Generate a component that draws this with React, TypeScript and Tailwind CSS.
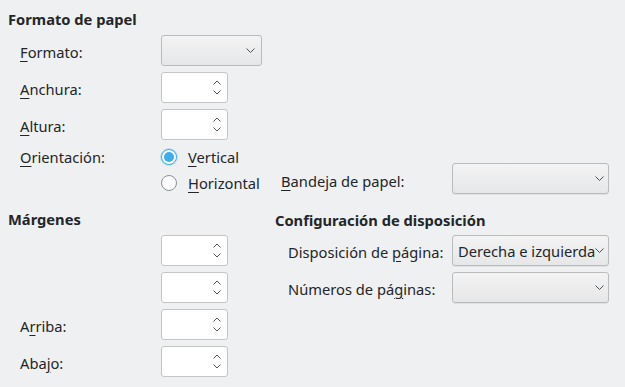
import React from "react";

const Chevron = ({ up = false, small = false }: { up?: boolean; small?: boolean }) =>
  small ? (
    <svg width="8" height="5" viewBox="0 0 8 5" className="block shrink-0">
      <polyline
        points={up ? "0.5,4.5 4,1 7.5,4.5" : "0.5,0.5 4,4 7.5,0.5"}
        fill="none"
        stroke="#4f5255"
        strokeWidth="1"
      />
    </svg>
  ) : (
    <svg width="9" height="5" viewBox="0 0 9 5" className="block shrink-0">
      <polyline
        points={up ? "0.5,4.5 4.5,0.5 8.5,4.5" : "0.5,0.5 4.5,4.5 8.5,0.5"}
        fill="none"
        stroke="#4f5255"
        strokeWidth="1"
      />
    </svg>
  );

const Combo = ({ w, text }: { w: string; text?: string }) => (
  <div
    className={`${w} shrink-0 h-[31px] rounded-[3px] border border-[#b9bbbd] bg-gradient-to-b from-[#f3f3f4] to-[#e6e7e8] flex items-center pl-[5px] pr-[4px] shadow-[0_1px_0_rgba(0,0,0,0.06)]`}
  >
    <div className="flex-1 overflow-hidden whitespace-nowrap text-[#232629]">{text}</div>
    <Chevron />
  </div>
);

const Spin = () => (
  <div className="w-[67px] shrink-0 h-[31px] rounded-[3px] border border-[#c3c5c7] bg-white flex items-center justify-end pr-[6px]">
    <div className="flex flex-col gap-[5px]">
      <Chevron up small />
      <Chevron small />
    </div>
  </div>
);

const Radio = ({ checked }: { checked?: boolean }) =>
  checked ? (
    <div className="w-4 h-4 shrink-0 rounded-full border border-[#3daee9] bg-[#fcfcfc] flex items-center justify-center shadow-[0_0_0_1px_rgba(61,174,233,0.25)]">
      <div className="w-[10px] h-[10px] rounded-full bg-[#3daee9]" />
    </div>
  ) : (
    <div className="w-4 h-4 shrink-0 rounded-full border border-[#8d8f91] bg-[#fcfcfc]" />
  );

const U = ({ children }: { children: React.ReactNode }) => (
  <span className="underline decoration-1 underline-offset-[3px]">{children}</span>
);

const Row = ({ label, children }: { label?: React.ReactNode; children: React.ReactNode }) => (
  <div className="flex items-center h-[31px]">
    <div className="w-[161px] shrink-0 pl-[20px] pt-[2px]">{label}</div>
    {children}
  </div>
);

export default function App() {
  return (
    <div
      className="w-[625px] h-[387px] bg-[#eff0f1] text-[#232629] text-[14.7px] leading-[20px] overflow-hidden"
      style={{ fontFamily: '"Noto Sans", "Open Sans", sans-serif' }}
    >
      {/* Top section */}
      <div className="pt-[9px]">
        <div className="pl-[8px] h-[20px] font-bold">Formato de papel</div>
        <div className="mt-[6px] flex flex-col gap-[6px]">
          <Row label={<><U>F</U>ormato:</>}>
            <div className="w-[101px] shrink-0 h-[31px] rounded-[3px] border border-[#b9bbbd] bg-gradient-to-b from-[#f3f3f4] to-[#e6e7e8] flex items-center justify-end pr-[6px]">
              <Chevron />
            </div>
          </Row>
          <Row label={<><U>A</U>nchura:</>}>
            <Spin />
          </Row>
          <Row label={<><U>A</U>ltura:</>}>
            <Spin />
          </Row>
        </div>
        <div className="mt-[6px] flex h-[48px]">
          <div className="w-[161px] shrink-0 pl-[20px] h-[22px] flex items-center">
            <span>
              <U>O</U>rientación:
            </span>
          </div>
          <div className="w-[120px] shrink-0 flex flex-col gap-[4px]">
            <div className="h-[22px] flex items-center">
              <Radio checked />
              <span className="ml-[11px]">
                <U>V</U>ertical
              </span>
            </div>
            <div className="h-[22px] flex items-center">
              <Radio />
              <span className="ml-[11px]">
                <U>H</U>orizontal
              </span>
            </div>
          </div>
          <div className="self-end flex items-center h-[31px]">
            <div className="w-[171px] shrink-0 pt-[5px]">
              <U>B</U>andeja de papel:
            </div>
            <Combo w="w-[157px]" />
          </div>
        </div>
      </div>

      {/* Bottom section */}
      <div className="mt-[15px] flex">
        <div className="w-[275px] shrink-0">
          <div className="pl-[8px] h-[20px] font-bold">Márgenes</div>
          <div className="mt-[6px] flex flex-col gap-[6px]">
            <Row>
              <Spin />
            </Row>
            <Row>
              <Spin />
            </Row>
            <Row label={<>A<U>r</U>riba:</>}>
              <Spin />
            </Row>
            <Row label={<>Aba<U>j</U>o:</>}>
              <Spin />
            </Row>
          </div>
        </div>
        <div className="flex-1">
          <div className="h-[20px] mt-[1px] font-bold">Configuración de disposición</div>
          <div className="mt-[5px] flex flex-col gap-[6px]">
            <div className="flex items-center h-[31px]">
              <div className="w-[177px] shrink-0 pl-[13px] pt-[2px]">
                Disposición de <U>p</U>ágina:
              </div>
              <Combo w="w-[157px]" text="Derecha e izquierda" />
            </div>
            <div className="flex items-center h-[31px]">
              <div className="w-[177px] shrink-0 pl-[13px] pt-[2px]">
                Números de pá<U>g</U>inas:
              </div>
              <Combo w="w-[157px]" />
            </div>
          </div>
        </div>
      </div>
    </div>
  );
}
